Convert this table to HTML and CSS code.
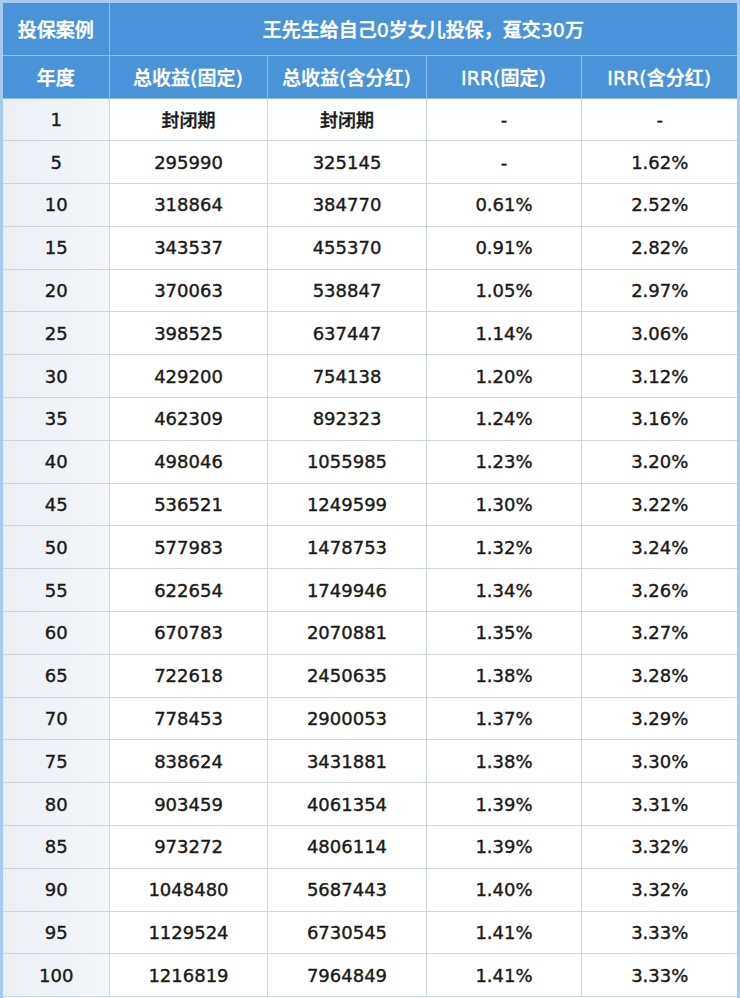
FILE: index.html
```html
<!DOCTYPE html>
<html lang="zh-CN">
<head>
<meta charset="utf-8">
<link rel="stylesheet" href="styles.css">
</head>
<body>
<div class="frame">
<table class="plan">
<colgroup>
<col class="c1"><col class="c2"><col class="c3"><col class="c4"><col class="c5">
</colgroup>
<thead>
<tr class="h1"><th>投保案例</th><th colspan="4">王先生给自己0岁女儿投保，趸交30万</th></tr>
<tr class="h2"><th>年度</th><th>总收益(固定)</th><th>总收益(含分红)</th><th>IRR(固定)</th><th>IRR(含分红)</th></tr>
</thead>
<tbody>
<tr><td>1</td><td>封闭期</td><td>封闭期</td><td>-</td><td>-</td></tr>
<tr><td>5</td><td>295990</td><td>325145</td><td>-</td><td>1.62%</td></tr>
<tr><td>10</td><td>318864</td><td>384770</td><td>0.61%</td><td>2.52%</td></tr>
<tr><td>15</td><td>343537</td><td>455370</td><td>0.91%</td><td>2.82%</td></tr>
<tr><td>20</td><td>370063</td><td>538847</td><td>1.05%</td><td>2.97%</td></tr>
<tr><td>25</td><td>398525</td><td>637447</td><td>1.14%</td><td>3.06%</td></tr>
<tr><td>30</td><td>429200</td><td>754138</td><td>1.20%</td><td>3.12%</td></tr>
<tr><td>35</td><td>462309</td><td>892323</td><td>1.24%</td><td>3.16%</td></tr>
<tr><td>40</td><td>498046</td><td>1055985</td><td>1.23%</td><td>3.20%</td></tr>
<tr><td>45</td><td>536521</td><td>1249599</td><td>1.30%</td><td>3.22%</td></tr>
<tr><td>50</td><td>577983</td><td>1478753</td><td>1.32%</td><td>3.24%</td></tr>
<tr><td>55</td><td>622654</td><td>1749946</td><td>1.34%</td><td>3.26%</td></tr>
<tr><td>60</td><td>670783</td><td>2070881</td><td>1.35%</td><td>3.27%</td></tr>
<tr><td>65</td><td>722618</td><td>2450635</td><td>1.38%</td><td>3.28%</td></tr>
<tr><td>70</td><td>778453</td><td>2900053</td><td>1.37%</td><td>3.29%</td></tr>
<tr><td>75</td><td>838624</td><td>3431881</td><td>1.38%</td><td>3.30%</td></tr>
<tr><td>80</td><td>903459</td><td>4061354</td><td>1.39%</td><td>3.31%</td></tr>
<tr><td>85</td><td>973272</td><td>4806114</td><td>1.39%</td><td>3.32%</td></tr>
<tr><td>90</td><td>1048480</td><td>5687443</td><td>1.40%</td><td>3.32%</td></tr>
<tr><td>95</td><td>1129524</td><td>6730545</td><td>1.41%</td><td>3.33%</td></tr>
<tr><td>100</td><td>1216819</td><td>7964849</td><td>1.41%</td><td>3.33%</td></tr>
</tbody>
</table>
</div>
</body>
</html>
```
FILE: styles.css
```css
html, body {
  margin: 0;
  padding: 0;
  background: #ffffff;
}
.frame {
  width: 740px;
  height: 998px;
  box-sizing: border-box;
  border-top: 3px solid #a7cbee;
  border-left: 3px solid #a7cbee;
  border-right: 3px solid #a7cbee;
  overflow: hidden;
  background: #ffffff;
}
.plan {
  width: 734px;
  border-collapse: collapse;
  table-layout: fixed;
  font-family: "DejaVu Sans", "Noto Sans CJK SC", sans-serif;
  font-weight: 500;
  color: #1a1a1a;
}
.c1 { width: 106px; }
.c2 { width: 158px; }
.c3 { width: 159px; }
.c4 { width: 155px; }
.c5 { width: 156px; }
.plan th {
  background: #4b93d8;
  color: #ffffff;
  font-size: 19px;
  font-weight: 500;
  -webkit-text-stroke: 0.45px #ffffff;
  text-align: center;
  padding: 0;
  border: 1px solid #8dbdea;
  border-top: none;
}
.plan th:first-child { border-left: none; }
.plan th:last-child { border-right: none; }
.h1 { height: 52px; }
.h2 { height: 43px; }
.plan td {
  font-size: 18px;
  text-align: center;
  padding: 0 0 0 1px;
  border: 1px solid #cad6e2;
  height: 41.8px;
  -webkit-text-stroke: 0.4px #1a1a1a;
}
.plan td:first-child {
  border-left: none;
  background: linear-gradient(to right, #ebeff5, #f4f6f8);
}
.plan td:last-child { border-right: none; }
```
